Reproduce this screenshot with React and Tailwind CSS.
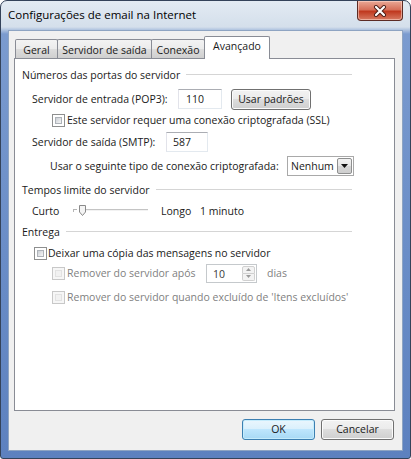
import React from 'react';

const Checkbox = ({ disabled }) => (
    <span className={`flex w-[13px] h-[13px] p-[2px] border ${disabled ? 'border-[#c8c8c8] bg-[#f6f6f6]' : 'border-[#8e8f8f] bg-white'}`}>
        <span className={`flex-1 border ${disabled ? 'border-[#e2e2e2] bg-[#f1f1f1]' : 'border-[#aeb3b9] bg-[linear-gradient(135deg,#cbcfd5,#f6f6f6)]'}`} />
    </span>
);

const GroupLabel = ({ children }) => (
    <div className="flex items-center h-[16px] ml-[7px] w-[330px]">
        <span className="whitespace-nowrap">{children}</span>
        <span className="flex-1 ml-[6px] h-[2px] border-t border-[#d5d5d5] border-b-white border-b" />
    </div>
);

const Button = ({ children, primary, className = '' }) => (
    <div
        className={`flex items-center justify-center h-[21px] rounded-[3px] border ${
            primary
                ? 'border-[#3c7fb1] bg-[linear-gradient(to_bottom,#eaf6fd_0%,#d9f0fc_50%,#bee6fd_50%,#a7d9f5_100%)] shadow-[inset_0_0_0_1px_#c5ecfc]'
                : 'border-[#707070] bg-[linear-gradient(to_bottom,#f2f2f2_0%,#ebebeb_50%,#dddddd_50%,#cfcfcf_100%)] shadow-[inset_0_0_0_1px_#fbfbfb]'
        } ${className}`}
    >
        {children}
    </div>
);

const Tab = ({ children, active, className = '' }) =>
    active ? (
        <div className={`relative z-10 -mb-px flex items-start justify-center pt-[4px] h-[23px] whitespace-nowrap bg-white border border-b-0 border-[#898c95] rounded-t-[2px] ${className}`}>
            {children}
        </div>
    ) : (
        <div className={`flex items-center justify-center h-[19px] pt-[2px] whitespace-nowrap border border-b-0 border-[#898c95] rounded-t-[2px] bg-[linear-gradient(to_bottom,#f3f3f3,#ebebeb_50%,#dddddd_50%,#cfcfcf)] ${className}`}>
            {children}
        </div>
    );

const Slider = () => (
    <svg width="76" height="12" viewBox="0 0 76 12">
        <line x1="0" y1="4.5" x2="4" y2="4.5" stroke="#b5b5b5" />
        <line x1="0.5" y1="4" x2="0.5" y2="7" stroke="#b5b5b5" />
        <line x1="13" y1="4.5" x2="75" y2="4.5" stroke="#c4c4c4" />
        <line x1="13" y1="5.5" x2="75" y2="5.5" stroke="#f2f2f2" />
        <polygon points="6.5,0.5 12.5,0.5 12.5,7 9.5,10.5 6.5,7" fill="#f4f4f4" stroke="#8a8a8a" />
    </svg>
);

const App = () => {
    return (
        <div className="w-[411px] h-[459px] bg-white font-['Open_Sans',sans-serif] text-[10.5px] leading-none text-[#1a1a1a]">
            <div className="flex flex-col w-full h-full rounded-t-[7px] rounded-b-[3px] border border-[#34435a] bg-[linear-gradient(to_bottom,#e3ebf3_0px,#d4dfeb_26px,#7b9bcf_33px,#6a8dc7_55%,#5d81bf_100%)]">
                {/* title bar */}
                <div className="relative flex items-center h-[29px] pl-[7px]">
                    <span className="text-[11.5px] text-black -mt-[2px]">Configurações de email na Internet</span>
                    <div className="absolute right-[7px] top-0 flex items-center justify-center w-[46px] h-[20px] rounded-b-[4px] border border-t-0 border-[#5c2b24] bg-[linear-gradient(to_bottom,#e9a896_0%,#d6705a_45%,#c0391f_55%,#d77a62_100%)] shadow-[inset_0_0_0_1px_rgba(255,220,210,0.55)]">
                        <svg width="14" height="12" viewBox="0 0 14 12">
                            <path d="M3 2 L11 10 M11 2 L3 10" stroke="#4a1c16" strokeWidth="4" strokeLinecap="round" />
                            <path d="M3 2 L11 10 M11 2 L3 10" stroke="#ffffff" strokeWidth="2.2" strokeLinecap="round" />
                        </svg>
                    </div>
                </div>

                {/* client area */}
                <div className="flex flex-col flex-1 mx-[7px] mb-[7px] border border-[#8ea4c2] bg-[#f0f0f0]">
                    <div className="ml-[5px] mt-[6px] w-[381px]">
                        <div className="flex items-end h-[21px] pl-[1px]">
                            <Tab className="w-[43px]">Geral</Tab>
                            <Tab className="w-[95px] -ml-px">Servidor de saída</Tab>
                            <Tab className="w-[54px] -ml-px">Conexão</Tab>
                            <Tab active className="w-[66px] -ml-px">Avançado</Tab>
                        </div>
                        <div className="flex flex-col h-[353px] border border-[#898c95] bg-white pt-[8px]">
                            <GroupLabel>Números das portas do servidor</GroupLabel>

                            <div className="flex items-center h-[20px] mt-[6px] ml-[17px]">
                                <span className="w-[146px] whitespace-nowrap">Servidor de entrada (POP3):</span>
                                <div className="flex items-center w-[44px] h-[20px] pl-[7px] border border-[#abadb3] border-r-[#e3e9ef] border-b-[#e3e9ef] border-l-[#e2e3ea]">110</div>
                                <Button className="w-[80px] ml-[9px]">Usar padrões</Button>
                            </div>

                            <div className="flex items-center h-[16px] mt-[3px] ml-[37px]">
                                <Checkbox />
                                <span className="ml-[2px]">Este servidor requer uma conexão criptografada (SSL)</span>
                            </div>

                            <div className="flex items-center h-[20px] mt-[4px] ml-[17px]">
                                <span className="w-[134px] whitespace-nowrap">Servidor de saída (SMTP):</span>
                                <div className="flex items-center w-[42px] h-[20px] pl-[6px] border border-[#abadb3] border-r-[#e3e9ef] border-b-[#e3e9ef] border-l-[#e2e3ea]">587</div>
                            </div>

                            <div className="flex items-center h-[20px] mt-[4px] ml-[35px]">
                                <span className="w-[237px] whitespace-nowrap">Usar o seguinte tipo de conexão criptografada:</span>
                                <div className="flex items-center justify-between w-[67px] h-[20px] pl-[3px] pr-[1px] border border-[#a9a9a9] bg-white">
                                    <span>Nenhum</span>
                                    <span className="flex items-center justify-center w-[15px] h-[16px] border border-[#8e8f8f] rounded-[2px] bg-[linear-gradient(to_bottom,#f2f2f2,#e6e6e6_50%,#d6d6d6_50%,#cfcfcf)]">
                                        <svg width="7" height="4" viewBox="0 0 7 4"><polygon points="0,0 7,0 3.5,4" fill="#111" /></svg>
                                    </span>
                                </div>
                            </div>

                            <div className="mt-[6px]">
                                <GroupLabel>Tempos limite do servidor</GroupLabel>
                            </div>

                            <div className="flex items-center h-[16px] mt-[5px] ml-[17px]">
                                <span className="w-[41px]">Curto</span>
                                <Slider />
                                <span className="ml-[12px] w-[39px]">Longo</span>
                                <span>1 minuto</span>
                            </div>

                            <div className="mt-[5px]">
                                <GroupLabel>Entrega</GroupLabel>
                            </div>

                            <div className="flex items-center h-[16px] mt-[5px] ml-[19px]">
                                <Checkbox />
                                <span className="ml-[1px]">Deixar uma cópia das mensagens no servidor</span>
                            </div>

                            <div className="flex items-center h-[20px] mt-[2px] ml-[37px] text-[#7f7f7f]">
                                <Checkbox disabled />
                                <span className="ml-[2px] w-[139px] whitespace-nowrap">Remover do servidor após</span>
                                <div className="flex items-center justify-between w-[51px] h-[19px] pl-[6px] pr-[1px] border border-[#c5c9cc] bg-white">
                                    <span className="text-[#3a3a3a] mt-[2px]">10</span>
                                    <div className="flex flex-col w-[13px] h-[15px]">
                                        <span className="flex items-center justify-center flex-1 border border-[#d0d0d0] rounded-t-[2px] bg-[#f3f3f3]">
                                            <svg width="5" height="3" viewBox="0 0 5 3"><polygon points="0,3 5,3 2.5,0" fill="#9a9a9a" /></svg>
                                        </span>
                                        <span className="flex items-center justify-center flex-1 border border-t-0 border-[#d0d0d0] rounded-b-[2px] bg-[#f3f3f3]">
                                            <svg width="5" height="3" viewBox="0 0 5 3"><polygon points="0,0 5,0 2.5,3" fill="#9a9a9a" /></svg>
                                        </span>
                                    </div>
                                </div>
                                <span className="ml-[10px]">dias</span>
                            </div>

                            <div className="flex items-center h-[16px] mt-[6px] ml-[37px] text-[#7f7f7f]">
                                <Checkbox disabled />
                                <span className="ml-[2px]">Remover do servidor quando excluído de 'Itens excluídos'</span>
                            </div>
                        </div>
                    </div>

                    <div className="flex justify-end gap-[6px] mt-[8px] pr-[8px]">
                        <Button primary className="w-[73px]">OK</Button>
                        <Button className="w-[73px]">Cancelar</Button>
                    </div>
                </div>
            </div>
        </div>
    );
};

export default App;
